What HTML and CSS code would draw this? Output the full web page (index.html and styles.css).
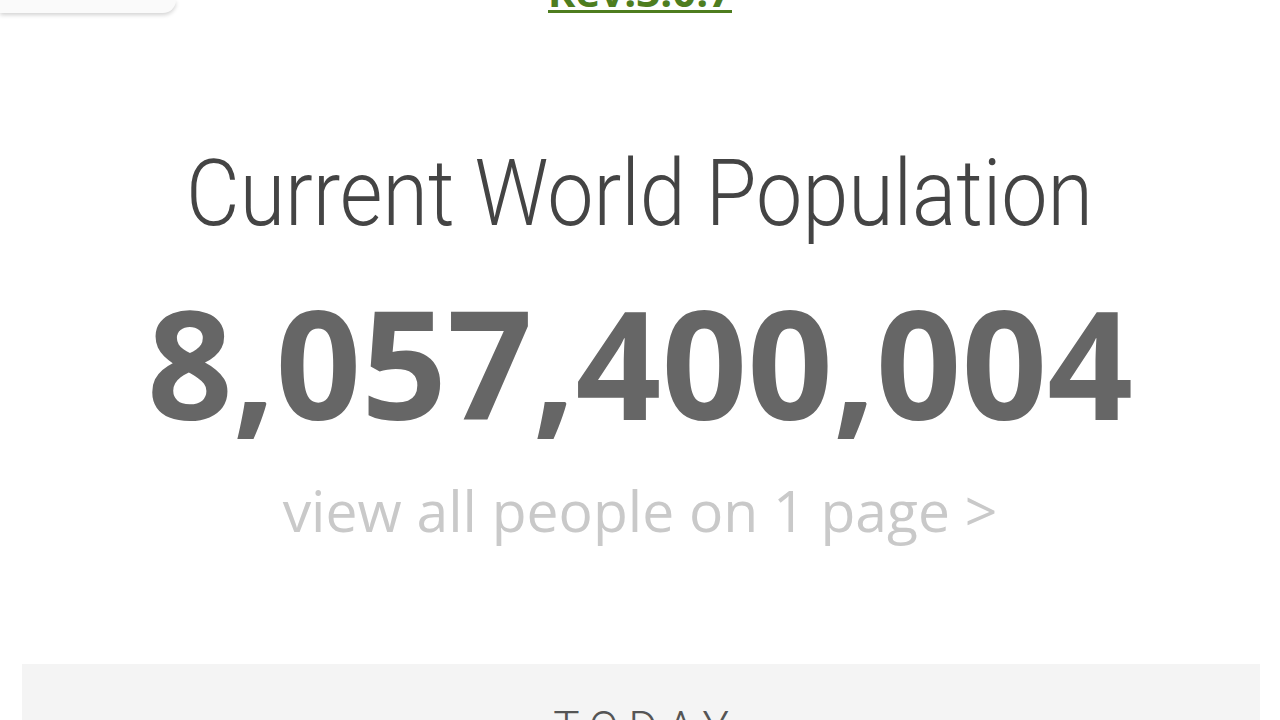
FILE: index.html
```html
<!DOCTYPE html>
<html lang="en">
<head>
    <meta charset="UTF-8">
    <meta name="viewport" content="width=device-width, initial-scale=1.0">
    <title>Current World Population</title>
    <link rel="stylesheet" href="styles.css">
</head>
<body>

<div class="top-bar">
    <div class="menu-card"></div>
    <a class="rev-link" href="#">Rev.3.0.7</a>
    <div></div>
</div>

<div class="counter">
    <h1 class="counter-title">Current World Population</h1>
    <div class="counter-number">8,057,400,004</div>
    <a class="counter-link" href="#">view all people on 1 page &gt;</a>
</div>

<div class="today-box">
    <div class="today-label">TODAY</div>
</div>

</body>
</html>
```

FILE: styles.css
```css
* {
    box-sizing: border-box;
    margin: 0;
    padding: 0;
}

html, body {
    height: 100%;
    overflow: hidden;
}

body {
    background: #fff;
    font-family: 'Open Sans', sans-serif;
}

a {
    text-decoration: none;
}

/* top strip, mostly scrolled out of view */
.top-bar {
    display: grid;
    grid-template-columns: 1fr auto 1fr;
    height: 13px;
}

.menu-card {
    width: 176px;
    height: 13px;
    background: #fafafa;
    border-radius: 0 0 16px 0;
    box-shadow: 0 2px 4px rgba(0, 0, 0, 0.18);
}

.rev-link {
    display: flex;
    align-items: flex-end;
    height: 13px;
    overflow: hidden;
    font-size: 42px;
    font-weight: bold;
    line-height: 1;
    color: #4e7d1f;
    text-decoration: underline;
    text-decoration-thickness: 3px;
    text-underline-offset: 3px;
    padding-bottom: 1px;
}

.counter {
    display: flex;
    flex-direction: column;
    align-items: center;
    padding-top: 135px;
}

.counter-title {
    font-family: 'Roboto', sans-serif;
    font-weight: 300;
    font-size: 92px;
    line-height: 1;
    color: #444;
    white-space: nowrap;
    transform: scaleX(0.897);
}

.counter-number {
    margin-top: 47px;
    font-size: 150px;
    font-weight: 700;
    line-height: 1;
    color: #666;
}

.counter-link {
    margin-top: 45px;
    font-size: 57px;
    line-height: 1;
    color: #c9c9c9;
}

.today-box {
    margin: 125px 20px 0 22px;
    height: 120px;
    background: #f4f4f4;
    padding-top: 42px;
    text-align: center;
}

.today-label {
    font-family: 'Roboto', sans-serif;
    font-weight: 300;
    font-size: 44px;
    line-height: 1;
    letter-spacing: 10px;
    padding-left: 10px;
    color: #555;
}
```
